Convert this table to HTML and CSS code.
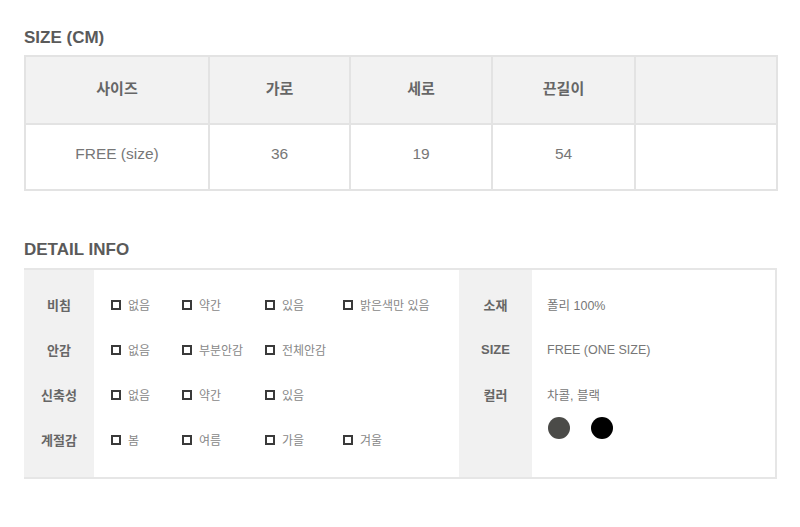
FILE: index.html
```html
<!DOCTYPE html>
<html lang="ko">
<head>
<meta charset="utf-8">
<title>Size &amp; Detail</title>
<link rel="stylesheet" href="styles.css">
</head>
<body>
<div class="page">
  <h2 class="title title-size">SIZE (CM)</h2>
  <table class="size-table">
    <colgroup>
      <col class="c1"><col class="c2"><col class="c3"><col class="c4"><col class="c5">
    </colgroup>
    <thead>
      <tr><th>사이즈</th><th>가로</th><th>세로</th><th>끈길이</th><th></th></tr>
    </thead>
    <tbody>
      <tr><td>FREE (size)</td><td>36</td><td>19</td><td>54</td><td></td></tr>
    </tbody>
  </table>

  <h2 class="title title-detail">DETAIL INFO</h2>
  <div class="detail">
    <div class="half left">
      <div class="labels">
        <div class="row">비침</div>
        <div class="row">안감</div>
        <div class="row">신축성</div>
        <div class="row">계절감</div>
      </div>
      <div class="values">
        <div class="row opts">
          <span class="opt"><i class="box"></i>없음</span>
          <span class="opt"><i class="box"></i>약간</span>
          <span class="opt"><i class="box"></i>있음</span>
          <span class="opt"><i class="box"></i>밝은색만 있음</span>
        </div>
        <div class="row opts">
          <span class="opt"><i class="box"></i>없음</span>
          <span class="opt"><i class="box"></i>부분안감</span>
          <span class="opt"><i class="box"></i>전체안감</span>
        </div>
        <div class="row opts">
          <span class="opt"><i class="box"></i>없음</span>
          <span class="opt"><i class="box"></i>약간</span>
          <span class="opt"><i class="box"></i>있음</span>
        </div>
        <div class="row opts">
          <span class="opt"><i class="box"></i>봄</span>
          <span class="opt"><i class="box"></i>여름</span>
          <span class="opt"><i class="box"></i>가을</span>
          <span class="opt"><i class="box"></i>겨울</span>
        </div>
      </div>
    </div>
    <div class="half right">
      <div class="labels">
        <div class="row">소재</div>
        <div class="row">SIZE</div>
        <div class="row">컬러</div>
      </div>
      <div class="values">
        <div class="row">폴리 100%</div>
        <div class="row">FREE (ONE SIZE)</div>
        <div class="row">차콜, 블랙</div>
        <div class="swatches">
          <span class="dot charcoal"></span>
          <span class="dot black"></span>
        </div>
      </div>
    </div>
  </div>
</div>
</body>
</html>
```

FILE: styles.css
```css
* { box-sizing: border-box; }
html, body { margin: 0; padding: 0; background: #fff; }
body {
  font-family: "Liberation Sans", "Noto Sans CJK KR", sans-serif;
  color: #777;
}
.page { padding: 27px 23px 0 24px; width: 800px; }

.title {
  margin: 0;
  font-size: 17px;
  line-height: 22px;
  font-weight: bold;
  color: #5a5a5a;
}
.title-size { margin-bottom: 6px; }
.title-detail { margin-top: 48px; margin-bottom: 7px; }

.size-table {
  width: 752px;
  border-collapse: collapse;
  table-layout: fixed;
  border: 2px solid #e3e3e3;
}
.size-table .c1 { width: 184px; }
.size-table .c2 { width: 141px; }
.size-table .c3 { width: 142px; }
.size-table .c4 { width: 143px; }
.size-table .c5 { width: 142px; }
.size-table th, .size-table td {
  border: 2px solid #e3e3e3;
  text-align: center;
  font-size: 15px;
  padding: 0;
}
.size-table th {
  height: 68px;
  background: #f2f2f2;
  color: #666;
  font-weight: bold;
  padding-bottom: 6px;
}
.size-table td {
  height: 66px;
  color: #777;
  font-weight: normal;
  font-size: 15.5px;
  padding-bottom: 7px;
}

.detail {
  width: 753px;
  height: 211px;
  display: grid;
  grid-template-columns: 435px 1fr;
  border: 2px solid #e6e6e6;
  border-left: none;
}
.half {
  display: grid;
}
.left { grid-template-columns: 70px 1fr; }
.right { grid-template-columns: 73px 1fr; }
.labels {
  background: #f1f1f1;
  padding-top: 12px;
}
.values { padding-top: 12px; }
.row {
  height: 45px;
  display: flex;
  align-items: center;
  font-size: 12.5px;
}
.labels .row {
  justify-content: center;
  font-weight: bold;
  color: #666;
  font-size: 13px;
}
.right .values { padding-left: 15px; }
.right .values .row { color: #777; }

.opts {
  display: grid;
  grid-template-columns: 71px 83px 78px auto;
  padding-left: 17px;
  align-items: center;
}
.opt {
  display: flex;
  align-items: center;
  color: #888;
  font-size: 12px;
}
.box {
  display: inline-block;
  width: 10px;
  height: 10px;
  border: 2px solid #3a3a3a;
  margin-right: 7px;
}

.swatches {
  display: flex;
  gap: 21px;
  padding-left: 1px;
  margin-top: 0;
}
.dot {
  width: 22px;
  height: 22px;
  border-radius: 50%;
  display: inline-block;
}
.charcoal { background: #4b4b48; }
.black { background: #000; }
```
